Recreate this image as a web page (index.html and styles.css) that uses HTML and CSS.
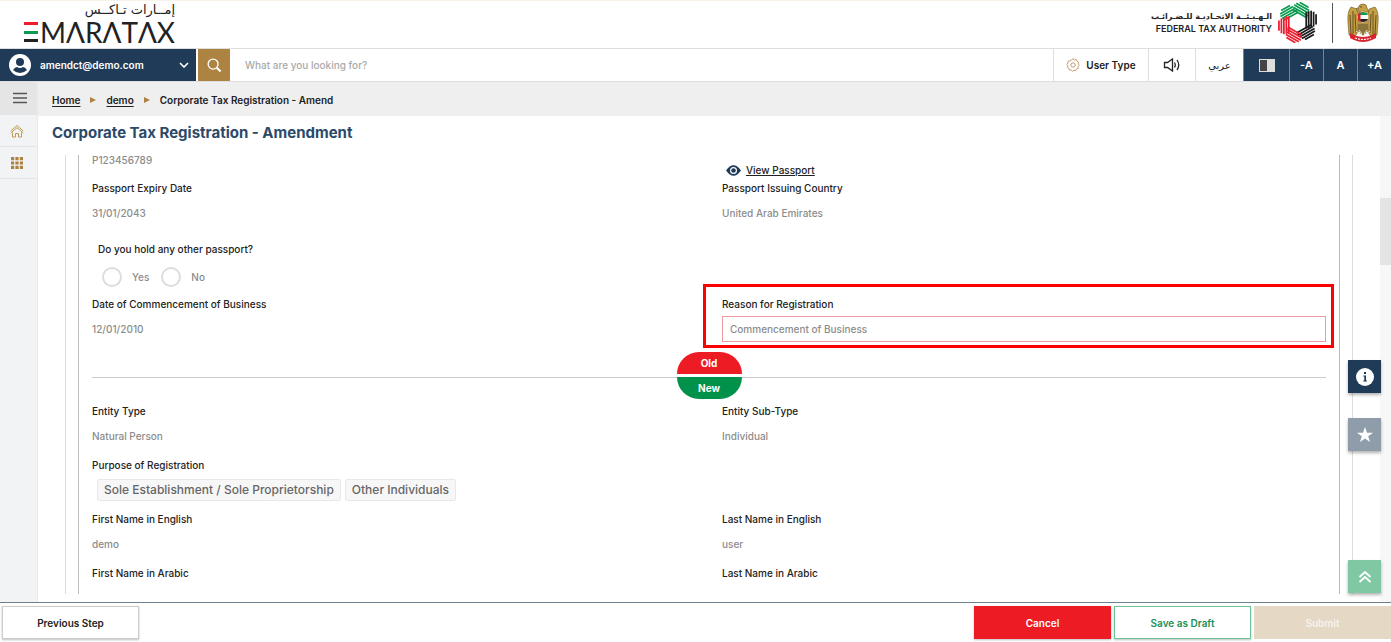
FILE: index.html
```html
<!DOCTYPE html>
<html lang="en">
<head>
    <meta charset="UTF-8">
    <meta name="viewport" content="width=device-width, initial-scale=1.0">
    <title>Corporate Tax Registration - Amendment</title>
    <link rel="stylesheet" href="styles.css">
</head>
<body>
    <header class="header">
        <div class="logo">
            <div class="logo-ar" lang="ar" dir="rtl">إمــارات تـاكــس</div>
            <div class="logo-en"><span class="logo-bars"></span>MΛRΛTΛX</div>
        </div>
        <div class="authority">
            <div class="authority-name">
                <div class="authority-ar" lang="ar" dir="rtl">الـهـيـئــة الاتحـاديـة للـضـرائـب</div>
                <div class="authority-en">FEDERAL TAX AUTHORITY</div>
            </div>
            <svg class="authority-mark" viewBox="-20 -20 40 40" fill="none" stroke-width="1.7">
                <defs>
                    <g id="blade">
                        <path d="M8.5 -10 V6"/>
                        <path d="M10.900 -11 V6"/>
                        <path d="M13.300 -11.500 V5"/>
                        <path d="M15.700 -10.500 V4"/>
                        <path d="M18.100 -8 V2"/>
                    </g>
                </defs>
                <use href="#blade" stroke="#0b9b50" transform="rotate(-120)"/>
                <use href="#blade" stroke="#0b9b50" transform="rotate(-60)"/>
                <use href="#blade" stroke="#1a1a1a" transform="rotate(0)"/>
                <use href="#blade" stroke="#1a1a1a" transform="rotate(60)"/>
                <use href="#blade" stroke="#ee1c2e" transform="rotate(120)"/>
                <use href="#blade" stroke="#ee1c2e" transform="rotate(180)"/>
            </svg>
            <span class="authority-rule"></span>
            <svg class="emblem" viewBox="0 0 32 40">
                <path d="M10 6 L4 4 Q0 9 1 20 L2 32 L7 35 L11 29 V11Z M22 6 L28 4 Q32 9 31 20 L30 32 L25 35 L21 29 V11Z" fill="#c5a045" stroke="#6b5421" stroke-width=".6"/>
                <path d="M3 12 L4 31 M6 8 L6 32 M8 11 L9 30 M29 12 L28 31 M26 8 L26 32 M24 11 L23 30" stroke="#5a481f" stroke-width=".9" fill="none"/>
                <path d="M11 5 Q12 1 16 1 Q20 1 20 5 L22 9 H10 L12 6 L9 6Z" fill="#c5a045" stroke="#6b5421" stroke-width=".6"/>
                <circle cx="14" cy="4" r=".7" fill="#333"/>
                <path d="M10 18 H22 L21 27 L16 33 L11 27Z" fill="#b5944a"/>
                <path d="M12 21 V29 M14 21 V31 M16 21 V32 M18 21 V31 M20 21 V29" stroke="#4f4222" stroke-width=".8"/>
                <circle cx="16" cy="14" r="6" fill="#fff" stroke="#b6903a"/>
                <path d="M11 12 Q12 9 16 9 Q20 9 21 12Z" fill="#0b9b50"/>
                <path d="M11 16 Q12 19 16 19 Q20 19 21 16Z" fill="#222"/>
                <path d="M11 11 Q12 9.500 13.500 9 V19 Q12 18.500 11 17Z" fill="#d8222c"/>
                <path d="M3 30 L7 32 Q16 36 25 32 L29 30 L29 35 L25 37 Q16 41 7 37 L3 35Z" fill="#d9242e"/>
                <path d="M8 35 Q16 38 24 35" stroke="#fff" stroke-width="1.2" stroke-dasharray="2 1" fill="none"/>
                <path d="M9 28 L13 31 M12 27 L15 31 M23 28 L19 31 M20 27 L17 31" stroke="#e8dfc3" stroke-width="1"/>
            </svg>
        </div>
    </header>

    <div class="toolbar">
        <button class="user" type="button">
            <svg class="user-icon" viewBox="0 0 22 22">
                <circle cx="11" cy="11" r="11" fill="#fff"/>
                <circle cx="11" cy="8" r="4" fill="#1f3b57"/>
                <path d="M4 16 Q6 13 8 13 Q11 15 14 13 Q16 13 18 16 Q15 19 11 19 Q7 19 4 16Z" fill="#1f3b57"/>
            </svg>
            <span>amendct@demo.com</span>
            <svg class="chevron" viewBox="0 0 10 6"><path d="M1 1 L5 5 L9 1" fill="none" stroke="#fff" stroke-width="1.6"/></svg>
        </button>
        <form class="search">
            <button class="search-button" type="button" aria-label="Search">
                <svg viewBox="0 0 16 16" fill="none" stroke="#fff"><circle cx="6.5" cy="6.5" r="5.3" stroke-width="1.4"/><path d="M10.5 10.5 L14.5 14.5" stroke-width="2.2"/></svg>
            </button>
            <input class="search-input" type="text" placeholder="What are you looking for?" aria-label="Search text">
        </form>
        <button class="tool user-type" type="button">
            <svg viewBox="0 0 14 14" fill="none" stroke="#c39b73">
                <path d="M5.6 1.8 L7 .7 L8.4 1.8 L10.4 1.6 L11 3.2 L12.6 4.2 L12.2 5.9 L13.2 7.3 L12 8.6 L12.2 10.4 L10.5 11 L9.6 12.6 L7.9 12.2 L6.4 13.2 L5.2 12 L3.4 12 L2.9 10.4 L1.4 9.4 L1.9 7.8 L.8 6.3 L2 5 L2 3.3 L3.7 2.9Z"/>
                <circle cx="7" cy="7" r="2.2"/>
            </svg>
            <span>User Type</span>
        </button>
        <button class="tool sound" type="button" aria-label="Read aloud">
            <svg viewBox="0 0 18 16" fill="none" stroke="#222" stroke-width="1.3">
                <path d="M1.5 5.5 H4.5 L9.5 2 V14 L4.5 10.5 H1.5Z"/>
                <path d="M11.5 5.5 Q13 8 11.5 10.5 M14 3 Q17.5 8 14 13"/>
            </svg>
        </button>
        <button class="tool arabic" type="button" lang="ar">عربي</button>
        <button class="tool dark contrast" type="button" aria-label="Contrast"><span class="contrast-icon"></span></button>
        <button class="tool dark" type="button">-A</button>
        <button class="tool dark" type="button">A</button>
        <button class="tool dark" type="button">+A</button>
    </div>

    <div class="page">
        <nav class="sidebar">
            <button class="side-item menu" type="button" aria-label="Menu">
                <svg viewBox="0 0 14 12" stroke="#555" stroke-width="1.6"><path d="M0 1.5 H14 M0 6 H14 M0 10.5 H14"/></svg>
            </button>
            <a class="side-item" href="#" aria-label="Home">
                <svg viewBox="0 0 14 14" fill="none" stroke="#c09a55"><path d="M.7 7 L7 1.5 L13.300 7 M.7 9 L7 3.700 L13.300 9 M2.500 8.500 V13 H5.500 V9.500 H8.500 V13 H11.500 V8.500"/></svg>
            </a>
            <a class="side-item" href="#" aria-label="Services">
                <svg viewBox="0 0 12 12" fill="#ac8341"><path d="M0 0h3.200v3.200H0zM4.400 0h3.200v3.200H4.400zM8.800 0H12v3.200H8.800zM0 4.400h3.200v3.200H0zM4.400 4.400h3.200v3.200H4.400zM8.800 4.400H12v3.200H8.800zM0 8.800h3.200V12H0zM4.400 8.800h3.200V12H4.400zM8.800 8.800H12V12H8.800z"/></svg>
            </a>
        </nav>

        <main class="main">
            <div class="breadcrumb">
                <a href="#">Home</a>
                <span class="arrow"></span>
                <a href="#">demo</a>
                <span class="arrow"></span>
                <span>Corporate Tax Registration - Amend</span>
            </div>

            <div class="body">
                <div class="content">
                    <h1>Corporate Tax Registration - Amendment</h1>
                    <div class="panel">
                        <div class="panel-inner">
                            <div class="fields">
                                <div class="row passport">
                                    <div class="value">P123456789</div>
                                    <a class="view-link" href="#">
                                        <svg viewBox="0 0 15 11"><path d="M0 5.500 Q7.500 -5 15 5.500 Q7.500 16 0 5.500Z" fill="#1f3b57"/><circle cx="7.500" cy="5.500" r="3.500" fill="#fff"/><circle cx="7.500" cy="5.500" r="2.300" fill="#1f3b57"/></svg>
                                        <span>View Passport</span>
                                    </a>
                                </div>
                                <div class="row">
                                    <div class="field"><div class="label">Passport Expiry Date</div><div class="value">31/01/2043</div></div>
                                    <div class="field"><div class="label">Passport Issuing Country</div><div class="value">United Arab Emirates</div></div>
                                </div>
                                <fieldset class="question">
                                    <legend class="label">Do you hold any other passport?</legend>
                                    <div class="options">
                                        <label class="option"><input type="radio" name="other-passport" disabled>Yes</label>
                                        <label class="option"><input type="radio" name="other-passport" disabled>No</label>
                                    </div>
                                </fieldset>
                                <div class="row">
                                    <div class="field"><div class="label">Date of Commencement of Business</div><div class="value">12/01/2010</div></div>
                                    <div class="field marked">
                                        <label class="label" for="reason">Reason for Registration</label>
                                        <input class="reason" id="reason" type="text" value="Commencement of Business" readonly>
                                    </div>
                                </div>

                                <div class="compare">
                                    <span class="pill old">Old</span>
                                    <span class="pill new">New</span>
                                </div>

                                <div class="stack">
                                    <div class="row">
                                        <div class="field"><div class="label">Entity Type</div><div class="value">Natural Person</div></div>
                                        <div class="field"><div class="label">Entity Sub-Type</div><div class="value">Individual</div></div>
                                    </div>
                                    <div class="field">
                                        <div class="label">Purpose of Registration</div>
                                        <div class="chips">
                                            <span class="chip">Sole Establishment / Sole Proprietorship</span>
                                            <span class="chip">Other Individuals</span>
                                        </div>
                                    </div>
                                    <div class="row">
                                        <div class="field"><div class="label">First Name in English</div><div class="value">demo</div></div>
                                        <div class="field"><div class="label">Last Name in English</div><div class="value">user</div></div>
                                    </div>
                                    <div class="row">
                                        <div class="label">First Name in Arabic</div>
                                        <div class="label">Last Name in Arabic</div>
                                    </div>
                                </div>
                            </div>
                        </div>
                    </div>
                </div>
                <div class="scrollbar"><div class="thumb"></div></div>
                <div class="floating">
                    <button class="float info" type="button" aria-label="Information">
                        <svg viewBox="0 0 18 18"><circle cx="9" cy="9" r="9" fill="#fff"/><path d="M8 4 H10 V6 H8Z M7.300 7.500 H10 V12.500 H11 V13.500 H7.300 V12.500 H8.300 V8.500 H7.300Z" fill="#1f3b57"/></svg>
                    </button>
                    <button class="float star" type="button" aria-label="Favourite">
                        <svg viewBox="0 0 18 18"><path d="M9 1 L11 6.700 H17 L12.200 10.300 L14 16 L9 12.600 L4 16 L5.800 10.300 L1 6.700 H7Z" fill="#fff"/></svg>
                    </button>
                    <button class="float top" type="button" aria-label="Back to top">
                        <svg viewBox="0 0 18 18" fill="none" stroke="#fff" stroke-width="1.8"><path d="M3.500 9 L9 4 L14.500 9 M3.500 14 L9 9 L14.500 14"/></svg>
                    </button>
                </div>
            </div>
        </main>
    </div>

    <footer class="footer">
        <button class="action previous" type="button">Previous Step</button>
        <div class="footer-right">
            <button class="action cancel" type="button">Cancel</button>
            <button class="action draft" type="button">Save as Draft</button>
            <button class="action submit" type="button" disabled>Submit</button>
        </div>
    </footer>
</body>
</html>
```

FILE: styles.css
```css
* {
    box-sizing: border-box;
}
body {
    margin: 0;
    height: 100vh;
    display: flex;
    flex-direction: column;
    overflow: hidden;
    font-family: Inter, "DejaVu Sans", sans-serif;
    font-size: 10px;
    font-weight: 500;
    color: #222;
    background-color: #fff;
}
button,
input {
    font: inherit;
    color: inherit;
}
button {
    padding: 0;
    border: none;
    background: none;
    cursor: pointer;
}
svg {
    display: block;
}

/* Header */
.header {
    display: flex;
    justify-content: space-between;
    height: 49px;
    padding: 0 12px 0 24px;
    border-top: 1px solid #f7f1ea;
    border-bottom: 1px solid #dedede;
}
.logo-ar {
    font-family: "DejaVu Sans", sans-serif;
    font-size: 13px;
    line-height: 17px;
}
.logo-en {
    display: flex;
    align-items: center;
    gap: 2px;
    font-family: Lato, sans-serif;
    font-size: 28px;
    font-weight: 400;
    line-height: 28px;
}
.logo-bars {
    width: 14px;
    height: 20px;
    background: linear-gradient(#ee1c2e 3px, #fff 3px 9px, #0b9b50 9px 12px, #fff 12px 17px, #222 17px);
}
.authority {
    display: flex;
    align-items: center;
    padding-bottom: 4px;
}
.authority-name {
    margin-right: 5px;
    text-align: right;
}
.authority-ar {
    font-family: "DejaVu Sans", sans-serif;
    font-size: 8px;
    font-weight: 700;
    line-height: 12px;
}
.authority-en {
    font-size: 9px;
    font-weight: 600;
    line-height: 12px;
}
.authority-mark {
    width: 41px;
    height: 41px;
}
.authority-rule {
    width: 1px;
    height: 40px;
    margin: 0 14px;
    background-color: #555;
}
.emblem {
    width: 32px;
    height: 40px;
}

/* Toolbar */
.toolbar {
    display: flex;
    height: 33px;
    border-bottom: 1px solid #dedede;
}
.user {
    display: flex;
    align-items: center;
    gap: 9px;
    width: 196px;
    padding: 0 7px 0 9px;
    background-color: #1f3b57;
    color: #fff;
    font-weight: 600;
}
.user-icon {
    width: 22px;
    height: 22px;
}
.chevron {
    width: 10px;
    height: 6px;
    margin-left: auto;
}
.search {
    display: flex;
    flex: 1;
    margin-left: 2px;
}
.search-button {
    display: flex;
    align-items: center;
    justify-content: center;
    width: 32px;
    background-color: #ac8341;
}
.search-button svg {
    width: 15px;
    height: 15px;
}
.search-input {
    flex: 1;
    padding: 0 15px;
    border: none;
}
.search-input::placeholder {
    color: #aaa;
}
.tool {
    display: flex;
    align-items: center;
    justify-content: center;
    width: 34px;
    border-left: 1px solid #dedede;
    font-weight: 600;
}
.user-type {
    gap: 6px;
    width: 95px;
}
.user-type svg {
    width: 14px;
    height: 14px;
}
.sound {
    width: 47px;
}
.sound svg {
    width: 18px;
    height: 16px;
}
.arabic {
    width: 48px;
    font-family: "DejaVu Sans", sans-serif;
    font-size: 10px;
    font-weight: 400;
}
.dark {
    border-left-color: #71869a;
    background-color: #1f3b57;
    color: #fff;
    font-size: 11px;
}
.contrast {
    width: 46px;
}
.contrast-icon {
    width: 16px;
    height: 13px;
    border: 1px solid #ddd;
    background: linear-gradient(90deg, #444 50%, #ddd 50%);
}

/* Page */
.page {
    display: flex;
    flex: 1;
    min-height: 0;
}
.sidebar {
    width: 38px;
    border-right: 1px solid #e8e9eb;
    background-color: #f2f3f5;
}
.side-item {
    display: flex;
    align-items: center;
    justify-content: center;
    width: 100%;
    height: 32px;
    padding-right: 3px;
    border-bottom: 1px solid #e4e5e7;
}
.side-item svg {
    width: 14px;
    height: 14px;
}
.side-item:last-child svg {
    width: 12px;
    height: 12px;
}
.menu {
    height: 33px;
    padding: 0 0 0 3px;
    background-color: #e5e5e5;
}
.main {
    display: flex;
    flex: 1;
    flex-direction: column;
    min-width: 0;
}
.breadcrumb {
    display: flex;
    align-items: center;
    gap: 10px;
    height: 34px;
    padding: 2px 14px 0;
    background-color: #efefef;
    font-weight: 600;
}
.breadcrumb a {
    color: inherit;
    text-underline-offset: 2px;
}
.arrow {
    border: 3px solid transparent;
    border-left: 6px solid #ac8341;
    border-right: none;
}
.body {
    position: relative;
    display: flex;
    flex: 1;
    min-height: 0;
}
.content {
    display: flex;
    flex: 1;
    flex-direction: column;
    min-width: 0;
    padding: 0 27px 8px;
}
h1 {
    margin: 0 -13px;
    font-size: 15px;
    font-weight: 700;
    line-height: 34px;
    color: #2b4a6a;
}
.panel {
    display: flex;
    flex: 1;
    min-height: 0;
    margin-top: 5px;
    padding: 0 12px;
    border: solid #ddd;
    border-width: 0 1px;
}
.panel-inner {
    flex: 1;
    overflow: hidden;
    padding: 0 13px;
    border: solid #bbb;
    border-width: 0 1px;
}

.row {
    display: grid;
    grid-template-columns: 1fr 1fr;
    gap: 26px;
}
.label {
    display: block;
    padding: 0;
    line-height: 24px;
}
.value {
    line-height: 26px;
    color: #8c8c8c;
}
.passport {
    align-items: end;
    height: 21px;
}
.passport .value {
    align-self: start;
    line-height: 10px;
}
.view-link {
    display: flex;
    align-items: center;
    gap: 5px;
    padding-left: 4px;
    line-height: 12px;
    color: #222;
}
.view-link svg {
    width: 15px;
    height: 11px;
}
.question {
    height: 66px;
    margin: 0;
    padding: 11px 6px 0;
    border: none;
}
.question .label {
    float: left;
}
.options {
    clear: both;
    display: flex;
    gap: 12px;
    padding: 6px 4px 0;
}
.option {
    display: flex;
    align-items: center;
    gap: 10px;
    color: #8c8c8c;
}
.option input {
    appearance: none;
    width: 20px;
    height: 20px;
    margin: 0;
    border: 2px solid #ddd;
    border-radius: 50%;
}
.marked {
    position: relative;
}
.marked::before {
    content: "";
    position: absolute;
    inset: -8px -8px -6px -19px;
    border: 3px solid #f00;
    pointer-events: none;
}
.reason {
    display: block;
    width: 100%;
    height: 26px;
    padding: 0 7px;
    border: 1px solid #f19a9f;
    color: #8c8c8c;
}
.compare {
    display: flex;
    flex-direction: column;
    align-items: center;
    gap: 3px;
    margin-top: 10px;
    background: linear-gradient(#ccc, #ccc) 0 25px / 100% 1px no-repeat;
}
.pill {
    width: 65px;
    color: #fff;
    font-weight: 700;
    line-height: 22px;
    text-align: center;
}
.old {
    border-radius: 24px 24px 0 0;
    background-color: #ed1c24;
}
.new {
    border-radius: 0 0 24px 24px;
    background-color: #00924a;
}
.stack {
    display: flex;
    flex-direction: column;
    gap: 4px;
}
.chips {
    display: flex;
    align-items: center;
    gap: 4px;
    height: 26px;
    padding-left: 5px;
}
.chip {
    padding: 0 6px;
    border: 1px solid #e8e8e8;
    border-radius: 2px;
    background-color: #f7f7f7;
    color: #666;
    font-size: 12px;
    line-height: 20px;
}
.scrollbar {
    width: 11px;
    padding-top: 82px;
    background-color: #f7f7f7;
}
.thumb {
    height: 67px;
    background-color: #e4e4e4;
}

/* Floating buttons over the form */
.floating {
    position: absolute;
    right: 10px;
    bottom: 9px;
    display: flex;
    flex-direction: column;
}
.float {
    display: flex;
    align-items: center;
    justify-content: center;
    width: 33px;
    height: 33px;
    box-shadow: 0 2px 3px rgba(0, 0, 0, 0.3);
}
.float svg {
    width: 18px;
    height: 18px;
}
.info {
    background-color: #1f3b57;
}
.star {
    margin-top: 25px;
    background-color: #8f9dab;
}
.top {
    margin-top: 109px;
    background-color: #80c8a4;
}

/* Footer */
.footer {
    display: flex;
    justify-content: space-between;
    height: 40px;
    padding: 3px 0 3px 2px;
    border-top: 1px solid #6f808f;
}
.footer-right {
    display: flex;
    gap: 3px;
}
.action {
    width: 137px;
    font-weight: 600;
    box-shadow: 0 1px 2px rgba(0, 0, 0, 0.25);
}
.previous {
    border: 1px solid #ccc;
}
.cancel {
    background-color: #ed1c24;
    color: #fff;
}
.draft {
    border: 1px solid #6cc498;
    color: #1f8f55;
}
.submit {
    background-color: #e5d8c4;
    box-shadow: none;
    color: #f8f3ec;
}
```
